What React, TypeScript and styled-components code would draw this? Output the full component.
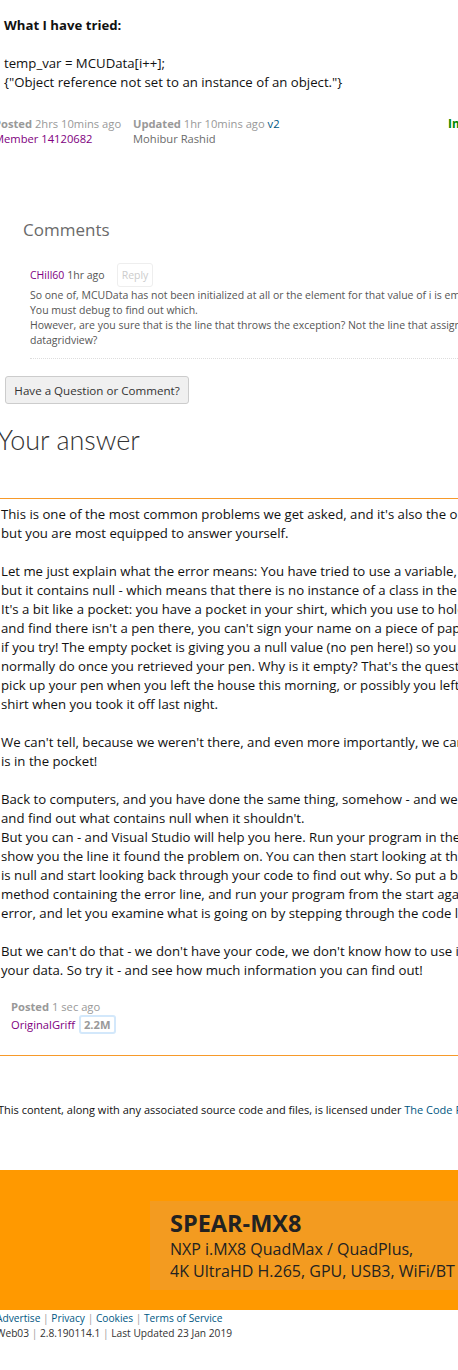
import { createGlobalStyle, styled } from 'styled-components';

const GlobalStyle = createGlobalStyle`
    html, body {
        margin: 0;
        padding: 0;
        background: #fff;
        overflow: hidden;
    }
    body {
        font-family: "Open Sans", "Noto Sans", "Liberation Sans", sans-serif;
        color: #111;
    }
`;

const Page = styled.div`
    width: 640px;
    height: 1370px;
    overflow: hidden;
`;

const Tried = styled.section`
    padding: 16px 0 0 4px;
    height: 108px;
    font-size: 13.2px;
    line-height: 19px;
`;

const TriedTitle = styled.div`
    font-weight: 700;
    height: 19px;
    margin-bottom: 19px;
`;

const CodeLine = styled.div`
    white-space: nowrap;
`;

const Gap = styled.div<{ $h: number }>`
    height: ${p => p.$h}px;
`;

const MetaRow = styled.div<{ $cols: string; $indent: number }>`
    display: grid;
    grid-template-columns: ${p => p.$cols};
    margin-left: ${p => p.$indent}px;
    font-size: 11.2px;
    line-height: 15px;
    white-space: nowrap;
`;

const MetaLabel = styled.span`
    font-weight: 700;
    color: #999;
`;

const MetaValue = styled.span`
    color: #999;
`;

const Version = styled.span`
    color: #005782;
`;

const Member = styled.div<{ $tone: 'purple' | 'grey' }>`
    color: ${p => (p.$tone === 'purple' ? '#800080' : '#6b6b6b')};
`;

const Improve = styled.div`
    font-weight: 700;
    color: #080;
    font-size: 12px;
`;

const CommentsBlock = styled.section`
    padding: 94px 0 0 0;
`;

const CommentsTitle = styled.h3`
    margin: 0 0 0 23px;
    height: 45px;
    font-size: 17px;
    font-weight: 400;
    line-height: 24px;
    color: #6a6a6a;
`;

const Comment = styled.div`
    margin-left: 30px;
    width: 600px;
    border-bottom: 1px dotted #ddd;
    padding-bottom: 10px;
`;

const CommentHead = styled.div`
    display: flex;
    align-items: center;
    gap: 7px;
    height: 24px;
    font-size: 10.5px;
    white-space: nowrap;
`;

const Author = styled.span`
    color: #800080;
`;

const Ago = styled.span`
    color: #555;
    margin-left: -4px;
`;

const ReplyBtn = styled.span`
    border: 1px solid #eee;
    border-radius: 3px;
    color: #ccc;
    padding: 0 4px;
    height: 22px;
    line-height: 22px;
    margin-left: 5px;
`;

const CommentText = styled.div`
    margin-top: 1px;
    font-size: 10.5px;
    line-height: 15px;
    color: #555;
    white-space: nowrap;
`;

const AskBtn = styled.button`
    display: block;
    margin: 17px 0 0 5px;
    width: 184px;
    height: 28px;
    background: #f0f0f0;
    border: 1px solid #ccc;
    border-radius: 3px;
    font-family: inherit;
    font-size: 11.6px;
    color: #333;
    padding: 0;
`;

const AnswerTitle = styled.h2`
    margin: 18px 0 0 -3px;
    font-family: Lato, "Open Sans", sans-serif;
    font-size: 27px;
    font-weight: 300;
    line-height: 36px;
    color: #333;
`;

const OrangeRule = styled.hr<{ $top: number }>`
    margin: ${p => p.$top}px 0 0 0;
    border: 0;
    border-top: 1px solid #f79a2a;
    height: 0;
`;

const AnswerBody = styled.div`
    padding-top: 6px;
    font-size: 13.2px;
    line-height: 19px;
    color: #111;
    white-space: nowrap;
    margin-left: 1px;
`;

const Para = styled.p<{ $last?: boolean }>`
    margin: 0 0 ${p => (p.$last ? 0 : 19)}px 0;
`;

const Signature = styled.div`
    margin: 19px 0 0 11px;
    font-size: 11.2px;
    line-height: 16px;
`;

const Badge = styled.span`
    display: inline-block;
    margin-left: 4px;
    padding: 0 3px;
    border: 2px solid #d3e8fb;
    border-radius: 3px;
    font-weight: 700;
    color: #999;
    line-height: 15px;
`;

const License = styled.div`
    margin: 46px 0 0 -2px;
    font-size: 11px;
    line-height: 16px;
    color: #111;
    white-space: nowrap;
`;

const Link = styled.a`
    color: #005782;
    text-decoration: none;
`;

const Banner = styled.div`
    margin-top: 52px;
    height: 140px;
    background: #ff9900;
    padding: 31px 0 0 150px;
    box-sizing: border-box;
`;

const AdBox = styled.div`
    width: 400px;
    height: 89px;
    background: #f39b20;
    padding: 7px 0 0 20px;
    box-sizing: border-box;
    font-family: "Open Sans", "Noto Sans", sans-serif;
    color: #222;
    white-space: nowrap;
`;

const AdTitle = styled.div`
    font-size: 23.5px;
    font-weight: 700;
    line-height: 30px;
`;

const AdLine = styled.div`
    font-size: 16px;
    line-height: 22px;
`;

const Footer = styled.div`
    margin: 1px 0 0 -4px;
    font-size: 10.2px;
    line-height: 15px;
    color: #333;
    white-space: nowrap;
`;

const Sep = styled.span`
    color: #999;
`;

export default function App() {
    return (
        <Page>
            <GlobalStyle />
            <Tried>
                <TriedTitle>What I have tried:</TriedTitle>
                <CodeLine>temp_var = MCUData[i++];</CodeLine>
                <CodeLine>{'{"Object reference not set to an instance of an object."}'}</CodeLine>
                <Gap $h={24} />
                <MetaRow $cols="139px 315px auto" $indent={-10}>
                    <div>
                        <MetaLabel>Posted</MetaLabel> <MetaValue>2hrs 10mins ago</MetaValue>
                        <Member $tone="purple">Member 14120682</Member>
                    </div>
                    <div>
                        <MetaLabel>Updated</MetaLabel> <MetaValue>1hr 10mins ago</MetaValue> <Version>v2</Version>
                        <Member $tone="grey">Mohibur Rashid</Member>
                    </div>
                    <Improve>Improve question</Improve>
                </MetaRow>
            </Tried>

            <CommentsBlock>
                <CommentsTitle>Comments</CommentsTitle>
                <Comment>
                    <CommentHead>
                        <Author>CHill60</Author>
                        <Ago>1hr ago</Ago>
                        <ReplyBtn>Reply</ReplyBtn>
                    </CommentHead>
                    <CommentText>
                        So one of, MCUData has not been initialized at all or the element for that value of i is empty.<br />
                        You must debug to find out which.<br />
                        However, are you sure that is the line that throws the exception? Not the line that assigns the data to the<br />
                        datagridview?
                    </CommentText>
                </Comment>
                <AskBtn>Have a Question or Comment?</AskBtn>
            </CommentsBlock>

            <AnswerTitle>Your answer</AnswerTitle>
            <OrangeRule $top={40} />

            <AnswerBody>
                <Para>
                    This is one of the most common problems we get asked, and it's also the one we are least equipped to answer,<br />
                    but you are most equipped to answer yourself.
                </Para>
                <Para>
                    Let me just explain what the error means: You have tried to use a variable, property, or a method return value<br />
                    but it contains null - which means that there is no instance of a class in the variable.<br />
                    It's a bit like a pocket: you have a pocket in your shirt, which you use to hold a pen. If you reach into the pocket<br />
                    and find there isn't a pen there, you can't sign your name on a piece of paper - and you will get very funny looks<br />
                    if you try! The empty pocket is giving you a null value (no pen here!) so you can't do anything that you would<br />
                    normally do once you retrieved your pen. Why is it empty? That's the question - it may be that you forgot to<br />
                    pick up your pen when you left the house this morning, or possibly you left the pen in the pocket of yesterday's<br />
                    shirt when you took it off last night.
                </Para>
                <Para>
                    We can't tell, because we weren't there, and even more importantly, we can't even see your shirt, much less what<br />
                    is in the pocket!
                </Para>
                <Para>
                    Back to computers, and you have done the same thing, somehow - and we can't see your code, much less run it<br />
                    and find out what contains null when it shouldn't.<br />
                    But you can - and Visual Studio will help you here. Run your program in the debugger and when it fails, VS will<br />
                    show you the line it found the problem on. You can then start looking at the various parts of it to see what value<br />
                    is null and start looking back through your code to find out why. So put a breakpoint at the beginning of the<br />
                    method containing the error line, and run your program from the start again. This time, VS will stop before the<br />
                    error, and let you examine what is going on by stepping through the code looking at your values.
                </Para>
                <Para $last>
                    But we can't do that - we don't have your code, we don't know how to use it if we did have it, we don't have<br />
                    your data. So try it - and see how much information you can find out!
                </Para>
            </AnswerBody>

            <Signature>
                <MetaLabel>Posted</MetaLabel> <MetaValue>1 sec ago</MetaValue>
                <div>
                    <Author>OriginalGriff</Author>
                    <Badge>2.2M</Badge>
                </div>
            </Signature>

            <OrangeRule $top={21} />

            <License>
                This content, along with any associated source code and files, is licensed under{' '}
                <Link>The Code Project Open License (CPOL)</Link>
            </License>

            <Banner>
                <AdBox>
                    <AdTitle>SPEAR-MX8</AdTitle>
                    <AdLine>NXP i.MX8 QuadMax / QuadPlus,</AdLine>
                    <AdLine>4K UltraHD H.265, GPU, USB3, WiFi/BT</AdLine>
                </AdBox>
            </Banner>

            <Footer>
                <div>
                    <Link>Advertise</Link> <Sep>|</Sep> <Link>Privacy</Link> <Sep>|</Sep> <Link>Cookies</Link>{' '}
                    <Sep>|</Sep> <Link>Terms of Service</Link>
                </div>
                <div>Web03 <Sep>|</Sep> 2.8.190114.1 <Sep>|</Sep> Last Updated 23 Jan 2019</div>
            </Footer>
        </Page>
    );
}
